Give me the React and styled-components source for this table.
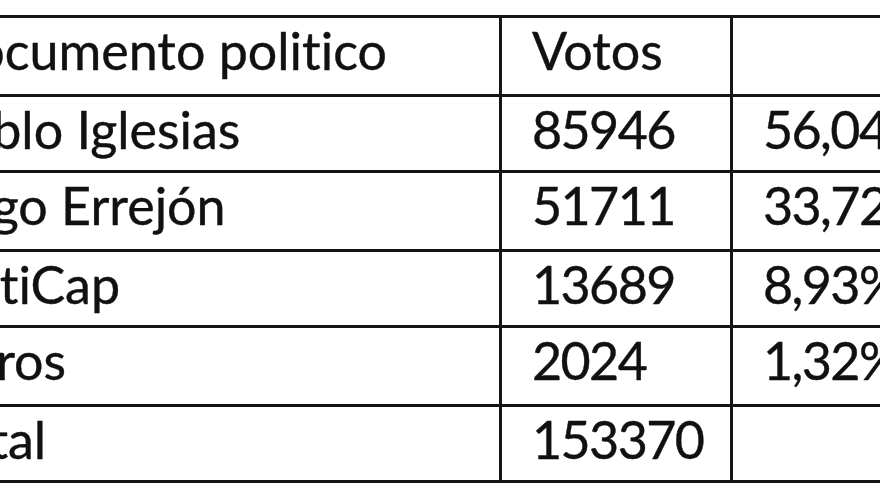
import React from "react";
import styled, { createGlobalStyle } from "styled-components";

const Global = createGlobalStyle`
  html, body { margin: 0; padding: 0; background: #fff; overflow: hidden; }
  body { width: 880px; height: 495px; }
`;

const Page = styled.div`
  width: 880px;
  height: 495px;
  overflow: hidden;
  background: #fff;
  padding-top: 15px;
  box-sizing: border-box;
`;

const Table = styled.table`
  border-collapse: collapse;
  margin-left: -97px;
  table-layout: fixed;
  width: 1087px;
  font-family: Lato, "Liberation Sans", sans-serif;
  font-size: 52px;
  font-variant-ligatures: none;
  color: #111;
  -webkit-text-stroke: 0.4px #111;
`;

const Col = styled.col`
  width: ${(p) => p.$w}px;
`;

const Row = styled.tr`
  height: ${(p) => p.$h}px;
`;

const Cell = styled.td`
  border: 3px solid #151515;
  vertical-align: top;
  padding: 1px 0 0 30px;
  line-height: 1.2;
  white-space: nowrap;
  overflow: hidden;
  box-sizing: border-box;
  letter-spacing: ${(p) => (p.$num ? "-1.6px" : "0")};
`;

const rows = [
  ["Documento politico", "Votos", ""],
  ["Pablo Iglesias", "85946", "56,04%"],
  ["Íñigo Errejón", "51711", "33,72%"],
  ["AntiCap", "13689", "8,93%"],
  ["Otros", "2024", "1,32%"],
  ["Total", "153370", ""],
];

const heights = [79, 76, 79, 76, 79, 76];
const widths = [596, 231, 260];

export default function App() {
  return (
    <Page>
      <Global />
      <Table>
        <colgroup>
          {widths.map((w, i) => (
            <Col key={i} $w={w} />
          ))}
        </colgroup>
        <tbody>
          {rows.map((r, i) => (
            <Row key={i} $h={heights[i]}>
              {r.map((c, j) => (
                <Cell key={j} $num={i > 0 && j > 0}>
                  {c}
                </Cell>
              ))}
            </Row>
          ))}
        </tbody>
      </Table>
    </Page>
  );
}
